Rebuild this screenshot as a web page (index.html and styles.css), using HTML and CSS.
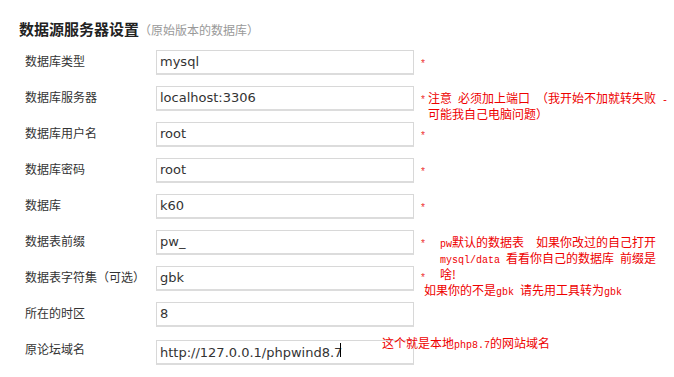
FILE: index.html
```html
<!DOCTYPE html>
<html lang="zh-CN">
<head>
    <meta charset="UTF-8">
    <title>数据源服务器设置</title>
    <link rel="stylesheet" href="styles.css">
</head>
<body>

<div class="settings">
    <h2>数据源服务器设置<small>（原始版本的数据库）</small></h2>

    <div class="row">
        <label for="dbtype">数据库类型</label>
        <input type="text" id="dbtype" value="mysql">
        <div class="note"><span class="req">*</span></div>
    </div>

    <div class="row">
        <label for="dbhost">数据库服务器</label>
        <input type="text" id="dbhost" value="localhost:3306">
        <div class="note">
            <span class="req">*</span>
            <span class="tip">注意<span class="en"> </span>必须加上端口<span class="en"> </span>（我开始不加就转失败<span class="en"> -</span><br>可能我自己电脑问题）</span>
        </div>
    </div>

    <div class="row">
        <label for="dbuser">数据库用户名</label>
        <input type="text" id="dbuser" value="root">
        <div class="note"><span class="req">*</span></div>
    </div>

    <div class="row">
        <label for="dbpass">数据库密码</label>
        <input type="text" id="dbpass" value="root">
        <div class="note"><span class="req">*</span></div>
    </div>

    <div class="row">
        <label for="dbname">数据库</label>
        <input type="text" id="dbname" value="k60">
        <div class="note"><span class="req">*</span></div>
    </div>

    <div class="row">
        <label for="dbpre">数据表前缀</label>
        <input type="text" id="dbpre" value="pw_">
        <div class="note">
            <span class="req">*</span>
            <span class="tip wide"><span class="en">pw</span>默认的数据表<span class="en">  </span>如果你改过的自己打开<br><span class="en">mysql/data </span>看看你自己的数据库<span class="en"> </span>前缀是<br>啥!</span>
        </div>
    </div>

    <div class="row">
        <label for="dbcharset">数据表字符集（可选）</label>
        <input type="text" id="dbcharset" value="gbk">
        <div class="note stack">
            <span class="req">*</span>
            <span class="tip">如果你的不是<span class="en">gbk </span>请先用工具转为<span class="en">gbk</span></span>
        </div>
    </div>

    <div class="row">
        <label for="timezone">所在的时区</label>
        <input type="text" id="timezone" value="8">
        <div class="note"></div>
    </div>

    <div class="row">
        <label for="siteurl">原论坛域名</label>
        <div class="field">
            <input type="text" id="siteurl" value="http://127.0.0.1/phpwind8.7">
            <span class="caret"></span>
        </div>
        <div class="note">
            <span class="tip over">这个就是本地<span class="en">php8.7</span>的网站域名</span>
        </div>
    </div>
</div>

</body>
</html>
```

FILE: styles.css
```css
body {
    margin: 0;
    font-family: "Noto Sans CJK SC", "DejaVu Sans", sans-serif;
    background-color: #ffffff;
    color: #333;
}
.settings {
    padding: 19px 0 0 19px;
}
.settings h2 {
    margin: 0 0 4px 0;
    font-size: 15px;
    line-height: 20px;
    font-weight: bold;
    color: #222;
}
.settings h2 small {
    font-size: 12px;
    font-weight: normal;
    color: #999;
}
.row {
    position: relative;
    display: grid;
    grid-template-columns: 131px 258px 1fr;
    grid-template-rows: 36px;
    align-items: center;
    height: 36px;
    padding-left: 6px;
}
.row label {
    font-size: 12px;
    padding-bottom: 3px;
    color: #333;
}
.row input {
    box-sizing: border-box;
    width: 258px;
    height: 25px;
    margin: 0;
    padding: 0 3px;
    border: 1px solid #d8d8d8;
    border-bottom: 2px solid #dcdcdc;
    font-family: "DejaVu Sans", sans-serif;
    font-size: 13px;
    color: #333;
    background: #fff;
    outline: none;
}
.field {
    position: relative;
    height: 25px;
}
.caret {
    position: absolute;
    left: 184px;
    top: 5px;
    width: 1px;
    height: 14px;
    background: #000;
}
.note {
    align-self: start;
    display: flex;
    align-items: flex-start;
    padding: 11px 0 0 6px;
    color: #e00;
    font-size: 12px;
    line-height: 13px;
    white-space: nowrap;
}
.note.stack {
    flex-direction: column;
    padding-top: 12px;
}
.req {
    font-family: "Liberation Mono", monospace;
    font-size: 10px;
    line-height: 13px;
    padding-top: 3px;
    width: 8px;
    color: #e33;
}
.note.stack .req {
    line-height: 8px;
}
.tip {
    display: block;
}
.tip.wide {
    margin-left: 12px;
}
.note.stack .tip {
    margin-left: 4px;
}
.tip.over {
    position: absolute;
    left: 363px;
    top: 4px;
}
.en {
    font-family: "Liberation Mono", monospace;
    font-size: 10px;
    white-space: pre;
}
```
